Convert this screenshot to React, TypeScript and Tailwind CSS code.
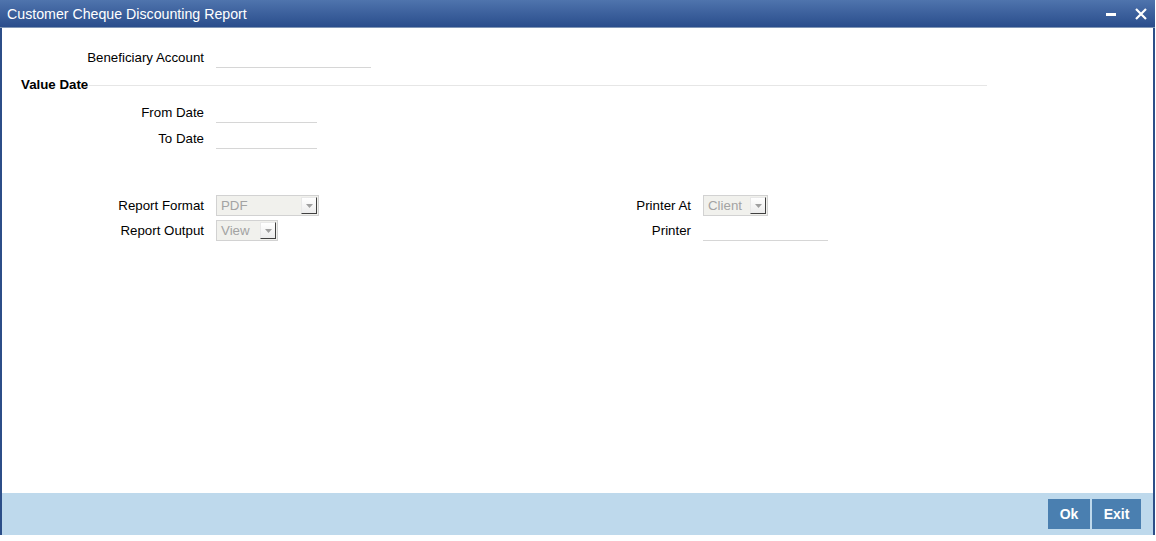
import React from 'react'

const font = { fontFamily: '"Liberation Sans", Arial, sans-serif' }

function Label({ children, width }: { children: React.ReactNode; width: string }) {
  return <div className={`${width} text-right text-[13.3px] leading-[20px] text-black`}>{children}</div>
}

function Underline({ width, h = 'h-[20px]' }: { width: string; h?: string }) {
  return <div className={`${width} ${h} border-b border-[#d6d6d6]`} />
}

function Select({ value, width }: { value: string; width: string }) {
  return (
    <div className={`${width} h-[21px] flex items-center justify-between border border-[#d2d2d2] bg-[#f1f1ed] pl-[4px] pr-[1px]`}>
      <span className="text-[13.3px] leading-[19px] text-[#a3a3a3]">{value}</span>
      <div className="w-[16px] h-[17px] flex items-center justify-center bg-gradient-to-b from-white to-[#ececec] border-t border-l border-[#e8e8e8] border-r border-b border-r-[#404040] border-b-[#404040]">
        <svg width="7" height="4" viewBox="0 0 7 4">
          <path d="M0 0 L7 0 L3.5 4 Z" fill="#a0a0a0" />
        </svg>
      </div>
    </div>
  )
}

export default function App() {
  return (
    <div className="w-[1156px] h-[541px] bg-white" style={font}>
      <div className="w-[1155px] h-[535px] flex flex-col border-x-2 border-[#2c4e88]">
        {/* title bar */}
        <div className="h-[28px] -mx-[2px] flex items-center justify-between bg-gradient-to-b from-[#4f74ad] to-[#2a4d8c] border-b border-[#8096b6] pl-[7px] pr-[8px]">
          <span className="text-white text-[14.2px] leading-[16px]">Customer Cheque Discounting Report</span>
          <div className="flex items-center gap-[19px]">
            <div className="w-[10px] h-[3px] bg-white mt-[2px]" />
            <svg width="12" height="12" viewBox="0 0 12 12">
              <path d="M1 1 L11 11 M11 1 L1 11" stroke="white" strokeWidth="2.2" />
            </svg>
          </div>
        </div>

        {/* body */}
        <div className="flex-1 flex flex-col pt-[20px]">
          <div className="flex gap-[12px]">
            <Label width="w-[202px]">Beneficiary Account</Label>
            <Underline width="w-[155px]" />
          </div>

          <div className="mt-[8px] h-[18px] w-[985px] flex items-center pl-[19px]">
            <span className="text-[13.3px] font-bold leading-[18px] text-black">Value Date</span>
            <div className="flex-1 h-px bg-[#e6e6e6] ml-[1px]" />
          </div>

          <div className="mt-[9px] flex flex-col gap-[6px]">
            <div className="flex gap-[12px]">
              <Label width="w-[202px]">From Date</Label>
              <Underline width="w-[101px]" />
            </div>
            <div className="flex gap-[12px]">
              <Label width="w-[202px]">To Date</Label>
              <Underline width="w-[101px]" />
            </div>
          </div>

          <div className="mt-[46px] flex">
            <div className="w-[487px] flex flex-col gap-[4px]">
              <div className="flex gap-[12px] items-center">
                <Label width="w-[202px]">Report Format</Label>
                <Select value="PDF" width="w-[103px]" />
              </div>
              <div className="flex gap-[12px] items-center">
                <Label width="w-[202px]">Report Output</Label>
                <Select value="View" width="w-[62px]" />
              </div>
            </div>
            <div className="flex flex-col gap-[4px]">
              <div className="flex gap-[12px] items-center">
                <Label width="w-[202px]">Printer At</Label>
                <Select value="Client" width="w-[65px]" />
              </div>
              <div className="flex gap-[12px] items-center">
                <Label width="w-[202px]">Printer</Label>
                <Underline width="w-[125px]" h="h-[21px]" />
              </div>
            </div>
          </div>
        </div>

        {/* footer */}
        <div className="h-[42px] bg-[#bed9ec] flex items-center justify-end gap-[2px] pr-[12px]">
          <button className="w-[42px] h-[30px] bg-[#4a7fb0] text-white text-[14px] font-bold">Ok</button>
          <button className="w-[49px] h-[30px] bg-[#4a7fb0] text-white text-[14px] font-bold">Exit</button>
        </div>
      </div>
    </div>
  )
}
